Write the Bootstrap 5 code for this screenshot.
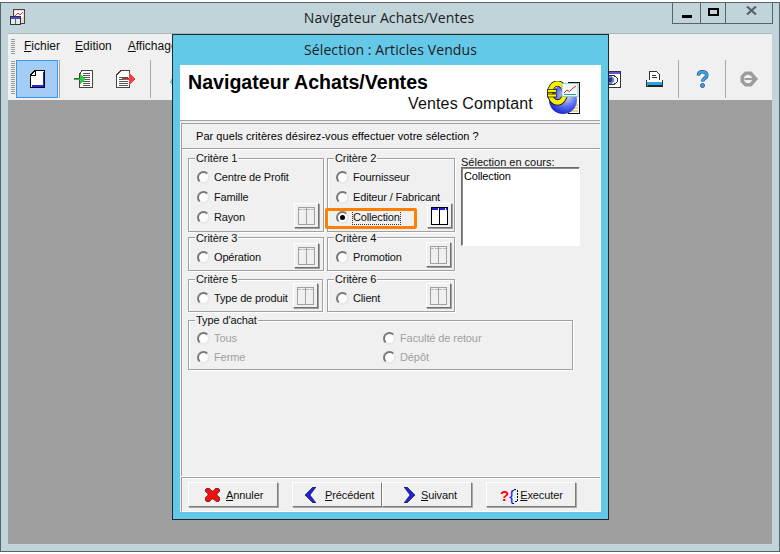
<!DOCTYPE html>
<html lang="fr"><head><meta charset="utf-8"><title>Navigateur Achats/Ventes</title>
<link href="https://cdn.jsdelivr.net/npm/bootstrap@5.3.0/dist/css/bootstrap.min.css" rel="stylesheet">
<style>
html,body{margin:0;padding:0;background:#fff;width:780px;height:554px;overflow:hidden}
body{font-family:"Liberation Sans",Arial,sans-serif;font-size:11px;line-height:13px;color:#000;padding-top:2px}
svg{display:block;shape-rendering:crispEdges}
.appwin{position:relative;width:780px;height:550px;background:#c0d4da;border:1px solid #56636b;display:flex;flex-direction:column}
.apptitle{height:30px;padding-left:8px;position:relative}
.apptitle svg.appicon{margin-top:6px;margin-left:1px}
.title-text{font-family:"Open Sans","Noto Sans",sans-serif;font-size:14px;line-height:20px;color:#1c1c1c;letter-spacing:.1px}
.apptitle .title-text{position:absolute;left:-2px;right:0;top:5px;text-align:center}
.winbtns{position:absolute;right:6px;top:-1px;height:22px;border:1px solid #56636b;border-top:0;width:101px}
.winbtn{height:21px;border-right:1px solid #56636b}
.w-min{width:28px;padding-bottom:5px}
.w-max{width:25px;padding-bottom:3px}
.w-close{padding:0 0 5px 4px}
.w-close svg{shape-rendering:auto}
.clientarea{margin:0 7px;flex:1;display:flex;flex-direction:column;border-top:1px solid #a9b6bb;background:#9f9f9f}
.menubar{height:25px;background:#f0f0f0;padding-left:3px;align-items:center}
.grip-h{width:4px;background-image:repeating-linear-gradient(#9a9a9a 0 1px,#f0f0f0 1px 2px)}
.menubar .grip-h{height:15px;margin-right:9px}
.menuitem{font-size:12px;margin-right:15px;color:#111}
.menuitem.m-wide{margin-right:16px}
.toolbar{height:41px;background:#f0f0f0;padding-left:3px;align-items:flex-start;padding-top:1px}
.toolbar .grip-h{height:34px;margin-right:1px;margin-top:1px}
.tbtn{width:42px;height:38px;display:flex;align-items:center;justify-content:center}
.tbtn.on{background:#a3cdf5;border:1px solid #3a96ee}
.tsep{width:1px;height:38px;background:#a8a8a8}
.t-first{margin-left:1px}
.t-green{width:45px;padding-left:2px}
.t-red{width:38px;padding-left:4px}
.t-sep2{margin-left:7px}
.t-flask{width:30px;padding-left:19px}
.t-eye{width:35px;padding-right:4px}
.t-print{width:48px}
.t-help{width:46px}
.t-go{width:46px}
.t-soft{shape-rendering:auto}
.dialog{position:absolute;left:171px;top:31px;width:437px;height:486px;background:#64c8e8;border:1px solid #1f2a30;padding:0 7px 7px 7px;display:flex;flex-direction:column}
.dlgtitle{height:30px;text-align:center;padding-top:5px;flex:none}
.dlgframe{flex:1;background:#f0f0f0;display:flex;flex-direction:column;border-right:1px solid #fff}
.dlghead{height:56px;background:#fff;border-bottom:1px solid #a0a0a0;position:relative;flex:none}
.h-main{font-weight:700;font-size:19.6px;line-height:22px;padding:6px 0 0 8px;color:#000}
.h-sub{font-size:16px;line-height:20px;font-weight:400;margin:1px 0 0 228px;color:#111;letter-spacing:.14px}
.dlglogo{position:absolute;left:367px;top:16px;shape-rendering:auto}
.panel{flex:1;margin:2px 0 0 1px;border:1px solid #a0a0a0;border-bottom:0;border-right:0;background:#f0f0f0;box-shadow:-1px 0 0 #fff}
.question{height:25px;border-bottom:1px solid #a0a0a0;box-shadow:0 1px 0 #fff;padding:6px 0 0 14px;letter-spacing:.05px}
.critgrid{display:grid;grid-template-columns:136px 128px;grid-template-rows:74px 34px 36px;column-gap:3px;row-gap:5px;margin:9px 0 0 6px;width:270px}
.gbox{border:1px solid #a0a0a0;box-shadow:1px 1px 0 #fff,inset 1px 1px 0 #fff;position:relative;display:flex;align-items:flex-end;padding:0 4px 3px 8px}
.gap-row{margin-top:3px}
.g-narrow{width:135px}
.pad-r2{padding-right:2px}
.pad-r3{padding-right:3px}
.pad-b2{padding-bottom:2px}
.legend-t{position:absolute;left:6px;top:-7px;background:#f0f0f0;padding:0 1px;line-height:13px;letter-spacing:-.1px;color:#111}
.legend-low{top:-6px}
.radios{display:flex;flex-direction:column;gap:7px;width:0;align-self:flex-start;padding-top:12px}
.radios.low{padding-top:13px}
.rad{display:flex;align-items:center;gap:4px;height:13px;letter-spacing:-.15px;white-space:nowrap;color:#111}
.rbox{width:13px;height:13px;border-radius:50%;background:#fdfdfd;border:2px solid;border-color:#777 #e8e8e8 #e8e8e8 #777;flex:none;display:flex;align-items:center;justify-content:center}
.rbox::after{content:"";width:5px;height:5px;border-radius:50%}
.rad.sel .rbox::after{background:#000}
.rad.off{color:#a0a0a0;letter-spacing:-.1px}
.rad.sel .rtxt{outline:1px dotted #333}
.tblbtn{width:25px;height:25px;margin-left:auto;background:#f0f0f0;border:1px solid;border-color:#fff #707070 #707070 #fff;box-shadow:1px 1px 0 #a0a0a0;display:flex;align-items:center;justify-content:center;padding:0;flex:none}
.selcol{position:absolute;left:279px;top:32px;width:119px}
.sel-label{line-height:13px;color:#111}
.sel-list{height:79px;margin-top:-2px;background:#fff;border:1px solid #6a6a6a;border-right-color:#fff;border-bottom-color:#fff;box-shadow:inset 1px 1px 0 #8a8a8a;padding:2px 2px 2px 2px;line-height:13px;letter-spacing:-.15px}
.orangebox{position:absolute;left:143px;top:84px;width:92px;height:21px;border:3px solid #ff8000;border-radius:2px;pointer-events:none}
.typebox{margin:8px 0 0 6px;width:385px;height:50px;display:grid;grid-template-columns:186px 1fr;padding:11px 0 0 8px;row-gap:6px;align-items:start;align-content:start}
.footer{height:35px;margin:1px 0 0 1px;border:1px solid #a0a0a0;border-bottom:1px solid #fff;border-right:0;box-shadow:0 -1px 0 #fff,inset 0 1px 0 #fff;padding:4px 0 0 6px;flex:none}
.wbtn{width:90px;height:25px;background:#f0f0f0;border:1px solid;border-color:#fff #7d7d7d #7d7d7d #fff;box-shadow:1px 1px 0 #a8a8a8;border-radius:0;padding:1px 0 0 0;font-size:11px;line-height:13px;letter-spacing:-.1px;color:#111;display:flex;align-items:center;justify-content:flex-start}
.wbtn:hover{background:#f0f0f0;color:#111;border-color:#fff #7d7d7d #7d7d7d #fff}
.b-ann{padding-left:16px;gap:6px}
.b-prev{padding-left:12px;gap:8px;margin-left:14px}
.b-next{padding-left:20px;gap:6px}
.b-exec{padding-left:13px;gap:2px;margin-left:14px}
.b-soft{shape-rendering:auto}
.q-red{color:#f00;font-weight:700;font-size:15px}
.q-blue{color:#00f;font-size:15px}
.exicon{display:flex;align-items:center;letter-spacing:0}
</style></head><body>
<div class="appwin">
  <div class="apptitle">
    <svg class="appicon" width="16" height="16" viewBox="0 0 16 16"><rect x="3.500" y=".5" width="11" height="14" fill="#f4d8d8" stroke="#444"/><rect x="5" y="2" width="8" height="6" fill="#fff"/><path d="M5 7l3-3 2 2 3-3" stroke="#d33" fill="none"/><rect x=".5" y="7.500" width="10" height="8" fill="#e8e8e8" stroke="#333"/><rect x="1" y="8" width="9" height="2" fill="#3a4fd0"/><path d="M5.500 10v5" stroke="#666"/></svg>
    <div class="title-text">Navigateur Achats/Ventes</div>
    <div class="winbtns d-flex">
      <div class="winbtn w-min d-flex align-items-end justify-content-center"><svg width="10" height="3"><rect width="10" height="3" fill="#000"/></svg></div>
      <div class="winbtn w-max d-flex align-items-center justify-content-center"><svg width="11" height="9"><rect x="1" y="1.5" width="9" height="6.5" fill="none" stroke="#000" stroke-width="2"/></svg></div>
      <div class="w-close d-flex align-items-center justify-content-center flex-grow-1"><svg width="11" height="9" viewBox="0 0 11 9"><path d="M1 .5l9 8M10 .5l-9 8" stroke="#5a6468" stroke-width="2.2"/></svg></div>
    </div>
  </div>
  <div class="clientarea">
    <div class="menubar d-flex">
      <div class="grip-h"></div>
      <span class="menuitem"><u>F</u>ichier</span><span class="menuitem m-wide"><u>E</u>dition</span><span class="menuitem"><u>A</u>ffichage</span>
    </div>
    <div class="toolbar d-flex">
      <div class="grip-h"></div>
      <div class="tbtn on"><svg width="15" height="18" viewBox="0 0 15 18"><path d="M5 .5h9v17H.5V5z" fill="#fff" stroke="#000"/><path d="M13 2h1v15H2v-2h11z" fill="#2222ee"/><path d="M5 1v4H1" fill="none" stroke="#000"/></svg></div>
      <div class="tsep t-first"></div>
      <div class="tbtn t-green"><svg width="19" height="18" viewBox="0 0 19 18"><path d="M8 .5h10v17H5V5z" fill="#fff" stroke="#444"/><path d="M9 3h7M9 5h7M9 7h7M9 9h7M9 11h7M9 13h7M9 15h7" stroke="#555"/><path d="M0 8h7v2H0z" fill="#555"/><path d="M6 4l6 5-6 5z" fill="#30d040"/><path d="M0 9h8" stroke="#30c030"/></svg></div>
      <div class="tbtn t-red"><svg width="20" height="18" viewBox="0 0 20 18"><path d="M5 .5h8v17H.5V5z" fill="#fff" stroke="#444"/><path d="M3 7h9M3 9h5M3 11h9M3 13h9M3 15h9" stroke="#555"/><path d="M6 8h8v2H6z" fill="#555"/><path d="M13 3l6 6-6 6z" fill="#f04040"/><path d="M7 9h7" stroke="#f04040"/></svg></div>
      <div class="tsep t-sep2"></div>
      <div class="tbtn t-flask"><svg width="16" height="18" viewBox="0 0 16 18"><path d="M7 .5L.5 14l6 3.500h2l7-3.500z" fill="#8fd0dc" stroke="#5aa"/></svg></div>
      <div class="flex-grow-1"></div>
      <div class="tbtn t-eye"><svg width="20" height="17" viewBox="0 0 20 17"><rect x=".5" y=".5" width="19" height="16" fill="#fff" stroke="#333"/><rect x="1" y="1" width="18" height="2" fill="#6a4ce0"/><ellipse cx="9" cy="9" rx="8" ry="5" fill="#e8f2f6" stroke="#333"/><circle cx="9" cy="9" r="4" fill="#6c80b8"/><circle cx="9" cy="9" r="2" fill="#2233aa"/></svg></div>
      <div class="tbtn t-print"><svg width="17" height="17" viewBox="0 0 17 17"><path d="M3.500 9V.5h7l3 3V9" fill="#fff" stroke="#333"/><path d="M6 4h4M6 6h5" stroke="#333"/><rect x=".5" y="9.500" width="16" height="6" fill="#2aa3e0" stroke="#333"/><rect x="1" y="9" width="15" height="2" fill="#fff"/><rect x="2" y="14" width="14" height="2" fill="#222"/></svg></div>
      <div class="tsep"></div>
      <div class="tbtn t-help"><svg class="t-soft" width="13" height="18" viewBox="0 0 13 18"><path d="M2.500 5.500C2.500 3 4 1.800 6.500 1.800S10.800 3.200 10.800 5.200c0 3-4.300 3.300-4.300 6.300" fill="none" stroke="#31557f" stroke-width="3.600"/><path d="M2.500 5.500C2.500 3 4 1.800 6.500 1.800S10.800 3.200 10.800 5.200c0 3-4.300 3.300-4.300 6.300" fill="none" stroke="#3aa6ea" stroke-width="2.200"/><circle cx="6.500" cy="15.500" r="2" fill="#3aa6ea" stroke="#31557f"/></svg></div>
      <div class="tsep"></div>
      <div class="tbtn t-go"><svg class="t-soft" width="18" height="16" viewBox="0 0 18 16"><path d="M5 .5h6.500L18 8l-6.500 7.500H5L.5 11V5z" fill="#9c9c9c"/><circle cx="8" cy="8" r="4.200" fill="#f0f0f0"/><rect x="4.500" y="7" width="8" height="2" fill="#9c9c9c"/></svg></div>
    </div>
    <div class="flex-grow-1"></div>
  </div>
  <div style="height:7px;flex:none"></div>

  <div class="dialog">
    <div class="dlgtitle title-text">Sélection : Articles Vendus</div>
    <div class="dlgframe">
      <div class="dlghead">
        <div class="h-main">Navigateur Achats/Ventes</div>
        <div class="h-sub">Ventes Comptant</div>
        <svg class="dlglogo" width="34" height="34" viewBox="0 0 34 34"><defs><radialGradient id="ballgrad" cx=".62" cy=".35" r=".7"><stop offset="0" stop-color="#dfe4fa"/><stop offset=".55" stop-color="#5a6cf0"/><stop offset="1" stop-color="#1424c8"/></radialGradient></defs><rect x="21.500" y="1.500" width="11" height="31" fill="#fff" stroke="#111"/><path d="M23 24h8M23 27h8M23 30h8" stroke="#d8c878" stroke-width="1.500"/><circle cx="16" cy="19" r="14" fill="url(#ballgrad)"/><ellipse cx="10.500" cy="12" rx="7.500" ry="9.500" fill="none" stroke="#111" stroke-width="6"/><ellipse cx="10.500" cy="12" rx="7.500" ry="9.500" fill="none" stroke="#f8f000" stroke-width="4.500"/><rect x=".5" y="8.500" width="9" height="3" fill="#f8f000" stroke="#111" stroke-width=".7"/><rect x=".5" y="13" width="9" height="3" fill="#f8f000" stroke="#111" stroke-width=".7"/><rect x="15" y="2.500" width="16" height="13" fill="#eef8f8" stroke="#9fc4c4"/><path d="M17 12l3-3 2.500 1.500L26 7l3-2" fill="none" stroke="#e02020"/><path d="M17 13.500h12" stroke="#20a0a0"/></svg>
      </div>
      <div class="panel position-relative">
        <div class="question">Par quels critères désirez-vous effectuer votre sélection ?</div>
        <div class="critgrid">
          <div class="gbox"><span class="legend-t">Critère 1</span>
            <div class="radios">
              <div class="rad"><span class="rbox"></span><span class="rtxt">Centre de Profit</span></div>
              <div class="rad"><span class="rbox"></span><span class="rtxt">Famille</span></div>
              <div class="rad"><span class="rbox"></span><span class="rtxt">Rayon</span></div>
            </div>
            <button class="tblbtn" type="button" aria-label="Liste"><svg width="17" height="18" viewBox="0 0 17 18"><rect x=".5" y=".5" width="16" height="17" fill="none" stroke="#a0a0a0"/><path d="M1 2h15" stroke="#b8b8b8" stroke-dasharray="3 1"/><path d="M8.500 1v16" stroke="#a0a0a0"/></svg></button>
          </div>
          <div class="gbox pad-r2"><span class="legend-t">Critère 2</span>
            <div class="radios">
              <div class="rad"><span class="rbox"></span><span class="rtxt">Fournisseur</span></div>
              <div class="rad"><span class="rbox"></span><span class="rtxt">Editeur / Fabricant</span></div>
              <div class="rad sel"><span class="rbox"></span><span class="rtxt">Collection</span></div>
            </div>
            <button class="tblbtn" type="button" aria-label="Liste"><svg width="17" height="18" viewBox="0 0 17 18"><rect x=".5" y=".5" width="16" height="17" fill="#fff" stroke="#000"/><path d="M1 2h15" stroke="#2020e0" stroke-width="2" stroke-dasharray="6 1"/><path d="M8.500 1v16" stroke="#000"/></svg></button>
          </div>
          <div class="gbox pad-b2"><span class="legend-t legend-low">Critère 3</span>
            <div class="radios low"><div class="rad"><span class="rbox"></span><span class="rtxt">Opération</span></div></div>
            <button class="tblbtn" type="button" aria-label="Liste"><svg width="17" height="18" viewBox="0 0 17 18"><rect x=".5" y=".5" width="16" height="17" fill="none" stroke="#a0a0a0"/><path d="M1 2h15" stroke="#b8b8b8" stroke-dasharray="3 1"/><path d="M8.500 1v16" stroke="#a0a0a0"/></svg></button>
          </div>
          <div class="gbox pad-r3"><span class="legend-t legend-low">Critère 4</span>
            <div class="radios low"><div class="rad"><span class="rbox"></span><span class="rtxt">Promotion</span></div></div>
            <button class="tblbtn" type="button" aria-label="Liste"><svg width="17" height="18" viewBox="0 0 17 18"><rect x=".5" y=".5" width="16" height="17" fill="none" stroke="#a0a0a0"/><path d="M1 2h15" stroke="#b8b8b8" stroke-dasharray="3 1"/><path d="M8.500 1v16" stroke="#a0a0a0"/></svg></button>
          </div>
          <div class="gbox gap-row g-narrow"><span class="legend-t">Critère 5</span>
            <div class="radios"><div class="rad"><span class="rbox"></span><span class="rtxt">Type de produit</span></div></div>
            <button class="tblbtn" type="button" aria-label="Liste"><svg width="17" height="18" viewBox="0 0 17 18"><rect x=".5" y=".5" width="16" height="17" fill="none" stroke="#a0a0a0"/><path d="M1 2h15" stroke="#b8b8b8" stroke-dasharray="3 1"/><path d="M8.500 1v16" stroke="#a0a0a0"/></svg></button>
          </div>
          <div class="gbox gap-row pad-r3"><span class="legend-t">Critère 6</span>
            <div class="radios"><div class="rad"><span class="rbox"></span><span class="rtxt">Client</span></div></div>
            <button class="tblbtn" type="button" aria-label="Liste"><svg width="17" height="18" viewBox="0 0 17 18"><rect x=".5" y=".5" width="16" height="17" fill="none" stroke="#a0a0a0"/><path d="M1 2h15" stroke="#b8b8b8" stroke-dasharray="3 1"/><path d="M8.500 1v16" stroke="#a0a0a0"/></svg></button>
          </div>
        </div>
        <div class="selcol">
          <div class="sel-label">Sélection en cours:</div>
          <div class="sel-list">Collection</div>
        </div>
        <div class="orangebox"></div>
        <div class="gbox typebox"><span class="legend-t">Type d'achat</span>
          <div class="rad off"><span class="rbox"></span><span class="rtxt">Tous</span></div>
          <div class="rad off"><span class="rbox"></span><span class="rtxt">Faculté de retour</span></div>
          <div class="rad off"><span class="rbox"></span><span class="rtxt">Ferme</span></div>
          <div class="rad off"><span class="rbox"></span><span class="rtxt">Dépôt</span></div>
        </div>
      </div>
      <div class="footer d-flex">
        <button class="btn wbtn b-ann" type="button"><svg class="b-soft" width="15" height="14" viewBox="0 0 15 14"><path d="M2 0h2l3 3h1l3-3h2l2 2v1L12 6v1l3 3v2l-2 2h-1L8 11H7l-3 3H2l-2-2v-2l3-3V6L0 3V2z" fill="#f01010" stroke="#222" stroke-width=".6"/></svg><span><u>A</u>nnuler</span></button>
        <button class="btn wbtn b-prev" type="button"><svg class="b-soft" width="12" height="16" viewBox="0 0 12 16"><path d="M8 0h3L5 8l6 8H8L0 8z" fill="#2020e0" stroke="#111" stroke-width=".6"/></svg><span><u>P</u>récédent</span></button>
        <button class="btn wbtn b-next" type="button"><svg class="b-soft" width="12" height="16" viewBox="0 0 12 16"><path d="M4 0H1l6 8-6 8h3l8-8z" fill="#2020e0" stroke="#111" stroke-width=".6"/></svg><span><u>S</u>uivant</span></button>
        <button class="btn wbtn b-exec" type="button"><span class="exicon"><span class="q-red">?</span><span class="q-blue">{</span><svg width="4" height="13" viewBox="0 0 4 13"><path d="M0 .5h3v12H0" fill="none" stroke="#000" stroke-dasharray="2 1"/></svg></span><span><u>E</u>xecuter</span></button>
      </div>
    </div>
  </div>
</div>
<script src="https://cdn.jsdelivr.net/npm/bootstrap@5.3.0/dist/js/bootstrap.bundle.min.js"></script>
</body></html>
